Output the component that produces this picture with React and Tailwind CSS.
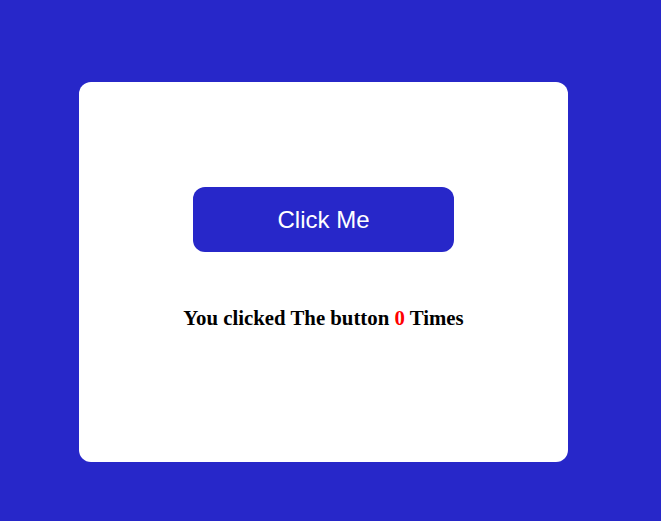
import { useState } from "react";

const App = () => {
  const [count, setCount] = useState(0);

  return (
    <div className="min-h-[521px] w-full bg-[#2727c9] pt-[82px] pl-[79px]">
      <div className="w-[489px] h-[380px] bg-white rounded-[12px] flex flex-col items-center pt-[105px]">
        <button
          onClick={() => setCount(count + 1)}
          className="w-[261px] h-[65px] rounded-[12px] bg-[#2727c9] text-white text-[24px] font-['Liberation_Sans',Arial,sans-serif] cursor-pointer"
        >
          Click Me
        </button>
        <p className="mt-[54px] text-[20.8px] leading-[24px] font-bold text-black font-['Liberation_Serif','Times_New_Roman',serif]">
          You clicked The button <span className="text-[#ff0000]">{count}</span> Times
        </p>
      </div>
    </div>
  );
};

export default App;
